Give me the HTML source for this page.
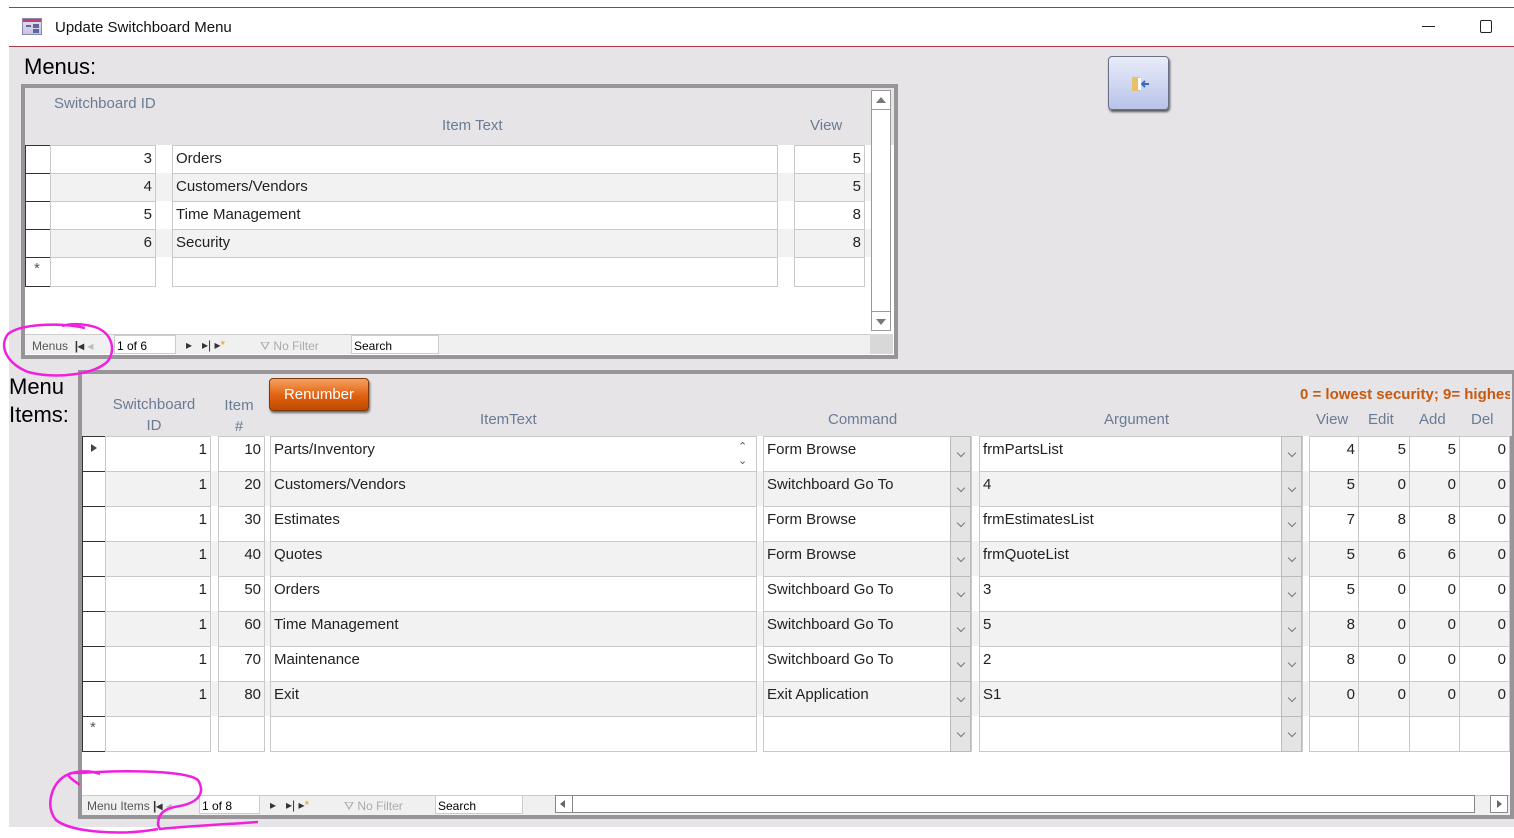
<!DOCTYPE html>
<html><head><meta charset="utf-8">
<style>
*{box-sizing:border-box;margin:0;padding:0}
body{width:1514px;height:838px;position:relative;background:#fff;font-family:"Liberation Sans",sans-serif;overflow:hidden}
.a{position:absolute}
.c{position:absolute;border:1px solid #c9c9c9;background:#fff;font-size:15px;color:#222;padding:4px 3px 2px;white-space:nowrap;overflow:hidden}
.r{text-align:right}
.g .c{background:#f2f2f2}
.h{position:absolute;color:#6a7b95;font-size:15px;text-align:center}
.dd{position:absolute;top:0;width:21px;height:36px;background:#e4e4e4;border:1px solid #bbb}
.dd:after{content:"";position:absolute;left:7px;top:13px;width:5px;height:5px;border-right:1px solid #777;border-bottom:1px solid #777;transform:rotate(45deg)}
.nav{position:absolute;font-size:12px;color:#555}
</style></head><body>
<div class="a" style="left:9px;top:7px;width:1505px;height:1px;background:#9b3a4a"></div>
<div class="a" style="left:22px;top:18px;width:20px;height:17px;border:1px solid #8a8ab0;background:linear-gradient(#e8e0f0,#c9c3e0)"><div class="a" style="left:0;top:0;width:18px;height:3px;background:#c04070"></div><div class="a" style="left:3px;top:6px;width:5px;height:2px;background:#5a6a9a"></div><div class="a" style="left:10px;top:5px;width:6px;height:4px;background:#5a6a9a"></div><div class="a" style="left:10px;top:10px;width:6px;height:4px;background:#5a6a9a"></div></div>
<div class="a" style="left:55px;top:19px;font-size:15px;color:#111">Update Switchboard Menu</div>
<div class="a" style="left:1422px;top:26px;width:13px;height:1px;background:#222"></div>
<div class="a" style="left:1480px;top:20px;width:12px;height:13px;border:1.5px solid #222;border-radius:2px"></div>
<div class="a" style="left:9px;top:46px;width:1505px;height:1px;background:#a33a4a"></div>
<div class="a" style="left:9px;top:47px;width:1505px;height:780px;background:#e6e4e6"></div>
<div class="a" style="left:24px;top:54px;font-size:22px;color:#000">Menus:</div>
<div class="a" style="left:1108px;top:56px;width:61px;height:54px;border-radius:4px;background:linear-gradient(#e9ecf8,#b8c3ea);border:1px solid #6a7088;box-shadow:1px 2px 2px #555">
<svg class="a" style="left:22px;top:18px" width="20" height="18" viewBox="0 0 20 18"><rect x="1" y="2" width="8" height="14" fill="#e8bf6a"/><rect x="7" y="3" width="3" height="12" fill="#fff"/><path d="M18 9H11M14 6L11 9L14 12" stroke="#3a6ac0" stroke-width="2" fill="none"/></svg></div>

<div class="a" style="left:21px;top:84px;width:877px;height:275px;border:4px solid #979597;background:#fff">
 <div class="a" style="left:0;top:0;width:869px;height:57px;background:#e6e4e6"></div>
 <div class="h" style="left:29px;top:7px;text-align:left">Switchboard ID</div>
 <div class="h" style="left:417px;top:29px">Item Text</div>
 <div class="h" style="left:785px;top:29px">View</div>
</div>
<div class="a" style="left:25px;top:145px;width:846px;height:145px">
 <div class="a" style="left:0;top:0;width:846px;height:28px"><div class="c" style="left:0;top:0;width:26px;height:29px;border-color:#333;border-width:1px 0 0 1px"></div><div class="c r" style="left:25px;top:0;width:106px;height:29px">3</div><div class="c" style="left:147px;top:0;width:606px;height:29px">Orders</div><div class="c r" style="left:769px;top:0;width:71px;height:29px">5</div></div>
 <div class="a g" style="left:0;top:28px;width:846px;height:28px;background:#f2f2f2"><div class="c" style="left:0;top:0;width:26px;height:29px;border-color:#333;border-width:1px 0 0 1px;background:#fff"></div><div class="c r" style="left:25px;top:0;width:106px;height:29px">4</div><div class="c" style="left:147px;top:0;width:606px;height:29px">Customers/Vendors</div><div class="c r" style="left:769px;top:0;width:71px;height:29px">5</div></div>
 <div class="a" style="left:0;top:56px;width:846px;height:28px"><div class="c" style="left:0;top:0;width:26px;height:29px;border-color:#333;border-width:1px 0 0 1px"></div><div class="c r" style="left:25px;top:0;width:106px;height:29px">5</div><div class="c" style="left:147px;top:0;width:606px;height:29px">Time Management</div><div class="c r" style="left:769px;top:0;width:71px;height:29px">8</div></div>
 <div class="a g" style="left:0;top:84px;width:846px;height:28px;background:#f2f2f2"><div class="c" style="left:0;top:0;width:26px;height:29px;border-color:#333;border-width:1px 0 0 1px;background:#fff"></div><div class="c r" style="left:25px;top:0;width:106px;height:29px">6</div><div class="c" style="left:147px;top:0;width:606px;height:29px">Security</div><div class="c r" style="left:769px;top:0;width:71px;height:29px">8</div></div>
 <div class="a" style="left:0;top:112px;width:846px;height:30px"><div class="c" style="left:0;top:0;width:26px;height:30px;border-color:#333;border-width:1px 0 1px 1px;color:#555;padding:2px 8px">*</div><div class="c" style="left:25px;top:0;width:106px;height:30px"></div><div class="c" style="left:147px;top:0;width:606px;height:30px"></div><div class="c" style="left:769px;top:0;width:71px;height:30px"></div></div>
</div>
<div class="a" style="left:871px;top:90px;width:20px;height:241px;border:1px solid #999;background:#fff"></div>
<div class="a" style="left:871px;top:90px;width:20px;height:20px;border:1px solid #999;background:#fff"><div class="a" style="left:4px;top:6px;border:5px solid transparent;border-bottom:6px solid #777;border-top:0"></div></div>
<div class="a" style="left:871px;top:311px;width:20px;height:20px;border:1px solid #999;background:#fff"><div class="a" style="left:4px;top:7px;border:5px solid transparent;border-top:6px solid #777;border-bottom:0"></div></div>
<div class="a" style="left:25px;top:334px;width:845px;height:20px;background:#f0f0f0;border-top:1px solid #ccc"></div>
<div class="a" style="left:870px;top:334px;width:23px;height:20px;background:#d8d8d8"></div>
<div class="nav" style="left:32px;top:339px">Menus &nbsp;<b style="color:#333">|◂</b> <span style="color:#bbb">◂</span></div>
<div class="a" style="left:114px;top:335px;width:62px;height:19px;background:#fff;border:1px solid #ccc;font-size:12px;padding:3px 2px">1 of 6</div>
<div class="nav" style="left:186px;top:338px;color:#333">▸ &nbsp;&nbsp;▸| ▸<span style="color:#e0a030">*</span></div>
<div class="nav" style="left:260px;top:339px;color:#aaa">⛛ No Filter</div>
<div class="a" style="left:351px;top:335px;width:88px;height:19px;background:#fff;border:1px solid #ccc;font-size:12px;padding:3px 2px">Search</div>

<div class="a" style="left:9px;top:373px;font-size:22px;color:#000;line-height:28px">Menu<br>Items:</div>

<div class="a" style="left:78px;top:370px;width:1436px;height:449px;border:4px solid #979597;background:#fff">
 <div class="a" style="left:0;top:0;width:1430px;height:62px;background:#e6e4e6"></div>
</div>
<div class="h" style="left:108px;top:394px;width:92px;line-height:21px">Switchboard<br>ID</div>
<div class="h" style="left:218px;top:395px;width:42px;line-height:21px">Item<br>#</div>
<div class="h" style="left:480px;top:411px">ItemText</div>
<div class="h" style="left:828px;top:411px">Command</div>
<div class="h" style="left:1104px;top:411px">Argument</div>
<div class="h" style="left:1316px;top:411px">View</div>
<div class="h" style="left:1368px;top:411px">Edit</div>
<div class="h" style="left:1419px;top:411px">Add</div>
<div class="h" style="left:1471px;top:411px">Del</div>
<div class="a" style="left:1300px;top:386px;font-size:15px;font-weight:bold;color:#c55a11;white-space:nowrap;width:210px;overflow:hidden">0 = lowest security; 9= highest</div>
<div class="a" style="left:269px;top:378px;width:100px;height:33px;border-radius:4px;background:linear-gradient(#f6a060,#e06010 55%,#c04a00);border:1px solid #7a3a10;box-shadow:1px 2px 2px #666;color:#fff;font-size:15px;text-align:center;line-height:31px">Renumber</div>

<div class="a" style="left:82px;top:436px;width:1428px;height:316px">
<div class="a" style="left:0;top:0;width:1428px;height:35px"><div class="c" style="left:0;top:0;width:24px;height:36px;border-color:#333;border-width:1px 0 0 1px"><div class="a" style="left:8px;top:7px;border:4px solid transparent;border-left:6px solid #444;border-right:0"></div></div><div class="c r" style="left:23px;top:0;width:106px;height:36px">1</div><div class="c r" style="left:136px;top:0;width:47px;height:36px">10</div><div class="c" style="left:188px;top:0;width:487px;height:36px">Parts/Inventory</div><div class="a" style="left:656px;top:4px;font-size:11px;color:#555;line-height:14px">&#8963;<br>&#8964;</div><div class="c" style="left:681px;top:0;width:209px;height:36px">Form Browse</div><div class="dd" style="left:868px"></div><div class="c" style="left:897px;top:0;width:324px;height:36px">frmPartsList</div><div class="dd" style="left:1199px"></div><div class="c r" style="left:1227px;top:0;width:50px;height:36px">4</div><div class="c r" style="left:1276px;top:0;width:52px;height:36px">5</div><div class="c r" style="left:1327px;top:0;width:51px;height:36px">5</div><div class="c r" style="left:1377px;top:0;width:51px;height:36px">0</div></div>
<div class="a g" style="left:0;top:35px;width:1428px;height:35px;background:#f2f2f2"><div class="c" style="left:0;top:0;width:24px;height:36px;border-color:#333;border-width:1px 0 0 1px;background:#fff"></div><div class="c r" style="left:23px;top:0;width:106px;height:36px">1</div><div class="c r" style="left:136px;top:0;width:47px;height:36px">20</div><div class="c" style="left:188px;top:0;width:487px;height:36px">Customers/Vendors</div><div class="c" style="left:681px;top:0;width:209px;height:36px">Switchboard Go To</div><div class="dd" style="left:868px"></div><div class="c" style="left:897px;top:0;width:324px;height:36px">4</div><div class="dd" style="left:1199px"></div><div class="c r" style="left:1227px;top:0;width:50px;height:36px">5</div><div class="c r" style="left:1276px;top:0;width:52px;height:36px">0</div><div class="c r" style="left:1327px;top:0;width:51px;height:36px">0</div><div class="c r" style="left:1377px;top:0;width:51px;height:36px">0</div></div>
<div class="a" style="left:0;top:70px;width:1428px;height:35px"><div class="c" style="left:0;top:0;width:24px;height:36px;border-color:#333;border-width:1px 0 0 1px"></div><div class="c r" style="left:23px;top:0;width:106px;height:36px">1</div><div class="c r" style="left:136px;top:0;width:47px;height:36px">30</div><div class="c" style="left:188px;top:0;width:487px;height:36px">Estimates</div><div class="c" style="left:681px;top:0;width:209px;height:36px">Form Browse</div><div class="dd" style="left:868px"></div><div class="c" style="left:897px;top:0;width:324px;height:36px">frmEstimatesList</div><div class="dd" style="left:1199px"></div><div class="c r" style="left:1227px;top:0;width:50px;height:36px">7</div><div class="c r" style="left:1276px;top:0;width:52px;height:36px">8</div><div class="c r" style="left:1327px;top:0;width:51px;height:36px">8</div><div class="c r" style="left:1377px;top:0;width:51px;height:36px">0</div></div>
<div class="a g" style="left:0;top:105px;width:1428px;height:35px;background:#f2f2f2"><div class="c" style="left:0;top:0;width:24px;height:36px;border-color:#333;border-width:1px 0 0 1px;background:#fff"></div><div class="c r" style="left:23px;top:0;width:106px;height:36px">1</div><div class="c r" style="left:136px;top:0;width:47px;height:36px">40</div><div class="c" style="left:188px;top:0;width:487px;height:36px">Quotes</div><div class="c" style="left:681px;top:0;width:209px;height:36px">Form Browse</div><div class="dd" style="left:868px"></div><div class="c" style="left:897px;top:0;width:324px;height:36px">frmQuoteList</div><div class="dd" style="left:1199px"></div><div class="c r" style="left:1227px;top:0;width:50px;height:36px">5</div><div class="c r" style="left:1276px;top:0;width:52px;height:36px">6</div><div class="c r" style="left:1327px;top:0;width:51px;height:36px">6</div><div class="c r" style="left:1377px;top:0;width:51px;height:36px">0</div></div>
<div class="a" style="left:0;top:140px;width:1428px;height:35px"><div class="c" style="left:0;top:0;width:24px;height:36px;border-color:#333;border-width:1px 0 0 1px"></div><div class="c r" style="left:23px;top:0;width:106px;height:36px">1</div><div class="c r" style="left:136px;top:0;width:47px;height:36px">50</div><div class="c" style="left:188px;top:0;width:487px;height:36px">Orders</div><div class="c" style="left:681px;top:0;width:209px;height:36px">Switchboard Go To</div><div class="dd" style="left:868px"></div><div class="c" style="left:897px;top:0;width:324px;height:36px">3</div><div class="dd" style="left:1199px"></div><div class="c r" style="left:1227px;top:0;width:50px;height:36px">5</div><div class="c r" style="left:1276px;top:0;width:52px;height:36px">0</div><div class="c r" style="left:1327px;top:0;width:51px;height:36px">0</div><div class="c r" style="left:1377px;top:0;width:51px;height:36px">0</div></div>
<div class="a g" style="left:0;top:175px;width:1428px;height:35px;background:#f2f2f2"><div class="c" style="left:0;top:0;width:24px;height:36px;border-color:#333;border-width:1px 0 0 1px;background:#fff"></div><div class="c r" style="left:23px;top:0;width:106px;height:36px">1</div><div class="c r" style="left:136px;top:0;width:47px;height:36px">60</div><div class="c" style="left:188px;top:0;width:487px;height:36px">Time Management</div><div class="c" style="left:681px;top:0;width:209px;height:36px">Switchboard Go To</div><div class="dd" style="left:868px"></div><div class="c" style="left:897px;top:0;width:324px;height:36px">5</div><div class="dd" style="left:1199px"></div><div class="c r" style="left:1227px;top:0;width:50px;height:36px">8</div><div class="c r" style="left:1276px;top:0;width:52px;height:36px">0</div><div class="c r" style="left:1327px;top:0;width:51px;height:36px">0</div><div class="c r" style="left:1377px;top:0;width:51px;height:36px">0</div></div>
<div class="a" style="left:0;top:210px;width:1428px;height:35px"><div class="c" style="left:0;top:0;width:24px;height:36px;border-color:#333;border-width:1px 0 0 1px"></div><div class="c r" style="left:23px;top:0;width:106px;height:36px">1</div><div class="c r" style="left:136px;top:0;width:47px;height:36px">70</div><div class="c" style="left:188px;top:0;width:487px;height:36px">Maintenance</div><div class="c" style="left:681px;top:0;width:209px;height:36px">Switchboard Go To</div><div class="dd" style="left:868px"></div><div class="c" style="left:897px;top:0;width:324px;height:36px">2</div><div class="dd" style="left:1199px"></div><div class="c r" style="left:1227px;top:0;width:50px;height:36px">8</div><div class="c r" style="left:1276px;top:0;width:52px;height:36px">0</div><div class="c r" style="left:1327px;top:0;width:51px;height:36px">0</div><div class="c r" style="left:1377px;top:0;width:51px;height:36px">0</div></div>
<div class="a g" style="left:0;top:245px;width:1428px;height:35px;background:#f2f2f2"><div class="c" style="left:0;top:0;width:24px;height:36px;border-color:#333;border-width:1px 0 0 1px;background:#fff"></div><div class="c r" style="left:23px;top:0;width:106px;height:36px">1</div><div class="c r" style="left:136px;top:0;width:47px;height:36px">80</div><div class="c" style="left:188px;top:0;width:487px;height:36px">Exit</div><div class="c" style="left:681px;top:0;width:209px;height:36px">Exit Application</div><div class="dd" style="left:868px"></div><div class="c" style="left:897px;top:0;width:324px;height:36px">S1</div><div class="dd" style="left:1199px"></div><div class="c r" style="left:1227px;top:0;width:50px;height:36px">0</div><div class="c r" style="left:1276px;top:0;width:52px;height:36px">0</div><div class="c r" style="left:1327px;top:0;width:51px;height:36px">0</div><div class="c r" style="left:1377px;top:0;width:51px;height:36px">0</div></div>
<div class="a" style="left:0;top:280px;width:1428px;height:36px"><div class="c" style="left:0;top:0;width:24px;height:36px;border-color:#333;border-width:1px 0 1px 1px;color:#555;padding:2px 7px">*</div><div class="c" style="left:23px;top:0;width:106px;height:36px"></div><div class="c" style="left:136px;top:0;width:47px;height:36px"></div><div class="c" style="left:188px;top:0;width:487px;height:36px"></div><div class="c" style="left:681px;top:0;width:209px;height:36px"></div><div class="dd" style="left:868px"></div><div class="c" style="left:897px;top:0;width:324px;height:36px"></div><div class="dd" style="left:1199px"></div><div class="c" style="left:1227px;top:0;width:50px;height:36px"></div><div class="c" style="left:1276px;top:0;width:52px;height:36px"></div><div class="c" style="left:1327px;top:0;width:51px;height:36px"></div><div class="c" style="left:1377px;top:0;width:51px;height:36px"></div></div>
</div>
<div class="a" style="left:82px;top:795px;width:1428px;height:20px;background:#f0f0f0;border-top:1px solid #ccc"></div>
<div class="nav" style="left:87px;top:799px">Menu Items <b style="color:#333">|◂</b> <span style="color:#bbb">◂</span></div>
<div class="a" style="left:199px;top:795px;width:61px;height:19px;background:#fff;border:1px solid #ccc;font-size:12px;padding:3px 2px">1 of 8</div>
<div class="nav" style="left:270px;top:798px;color:#333">▸ &nbsp;&nbsp;▸| ▸<span style="color:#e0a030">*</span></div>
<div class="nav" style="left:344px;top:799px;color:#aaa">⛛ No Filter</div>
<div class="a" style="left:435px;top:795px;width:88px;height:19px;background:#fff;border:1px solid #ccc;font-size:12px;padding:3px 2px">Search</div>
<div class="a" style="left:555px;top:795px;width:18px;height:18px;background:#fff;border:1px solid #888"><div class="a" style="left:4px;top:4px;border:4px solid transparent;border-right:5px solid #666;border-left:0"></div></div>
<div class="a" style="left:572px;top:795px;width:903px;height:18px;background:#fff;border:1px solid #888"></div>
<div class="a" style="left:1490px;top:795px;width:18px;height:18px;background:#fff;border:1px solid #888"><div class="a" style="left:6px;top:4px;border:4px solid transparent;border-left:5px solid #666;border-right:0"></div></div>

<svg class="a" style="left:0;top:0" width="1514" height="838" viewBox="0 0 1514 838">
<path d="M85 328 C60 322 20 324 8 334 C-2 347 8 364 28 372 C55 379 95 375 108 361 C116 349 112 333 95 327 C85 324 72 323 62 326" fill="none" stroke="#f020e0" stroke-width="2.5"/>
<path d="M80 785 C70 778 60 772 80 773 C120 770 185 770 198 780 C205 792 200 802 180 806 C166 808 158 812 158 825 L160 829 C190 826 230 824 258 822 M158 829 C120 836 70 832 56 820 C46 808 50 788 62 778 C72 770 90 770 100 774" fill="none" stroke="#f020e0" stroke-width="2.5"/>
</svg>
</body></html>
